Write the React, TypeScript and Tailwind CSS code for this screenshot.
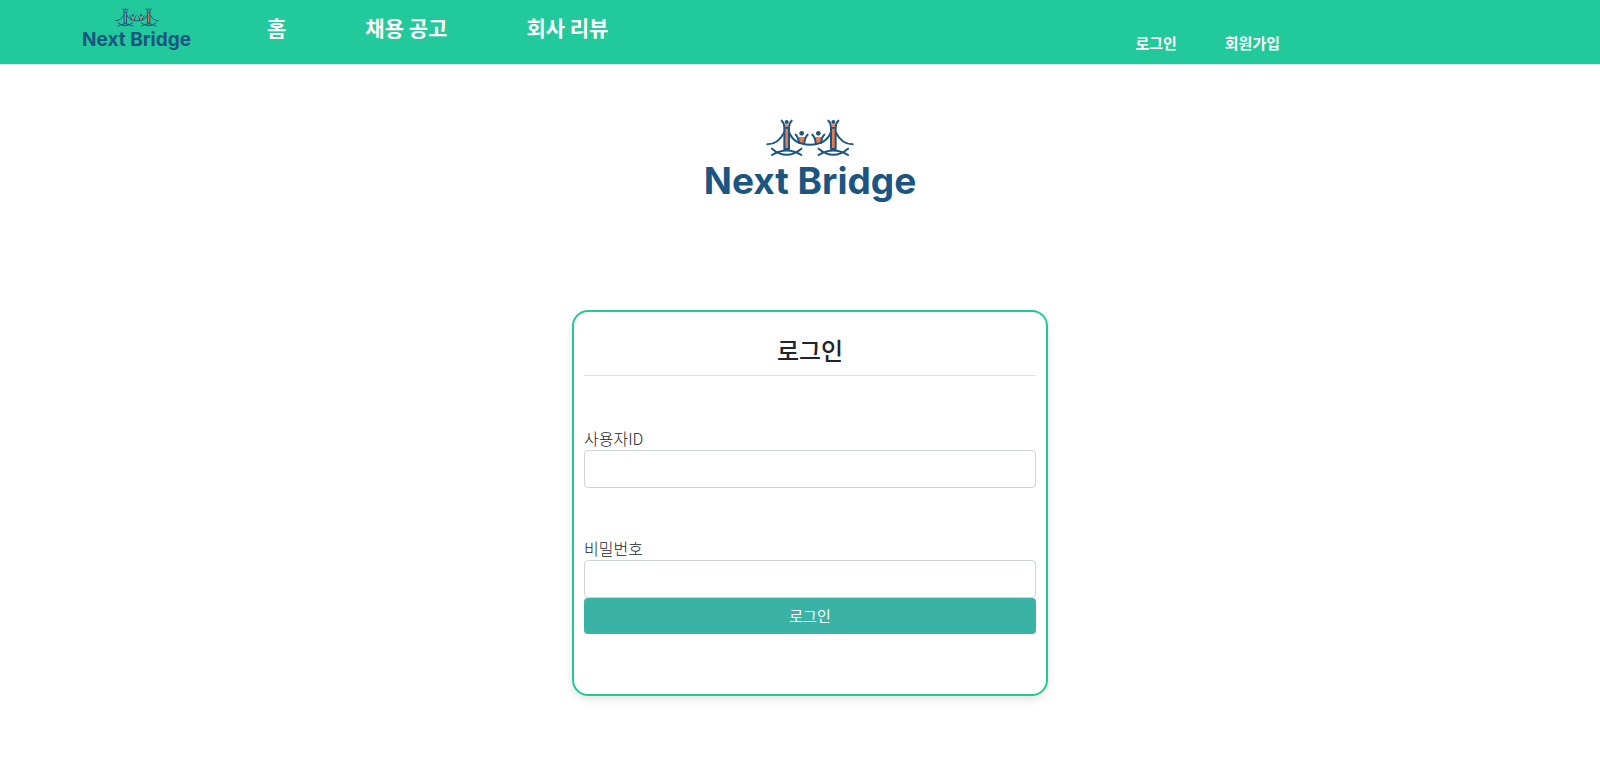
import React from "react";

const koreanFont = "font-['Noto_Sans_CJK_KR',sans-serif]";

function Tower({ x }: { x: number }) {
  return (
    <g transform={`translate(${x} 0)`}>
      <path d="M-5 66H5V131H-5Z" fill="#f0794a" stroke="none" />
      <path d="M-15 46Q-7 53 -7 66V131M15 46Q7 53 7 66V131M-7 67H7M-7 131H7" />
      <path d="M-5 57H5V64H-5Z" fill="#f0794a" stroke="none" />
      <circle cx="0" cy="50" r="6" fill="#1a5681" stroke="none" />
      <path d="M-44 130Q0 167 44 130M-44 149Q0 122 44 149" />
    </g>
  );
}

function Person({ x }: { x: number }) {
  return (
    <g transform={`translate(${x} 0)`}>
      <path d="M-10 95H10L7 115H-7Z" fill="#f0794a" stroke="none" />
      <path d="M-18 88Q-10 95 -8 113M18 88Q10 95 8 113" />
      <circle cx="0" cy="84" r="7" fill="#1a5681" stroke="none" />
    </g>
  );
}

function BridgeMark({ className }: { className: string }) {
  return (
    <svg
      viewBox="227 41 264 114"
      className={className}
      fill="none"
      stroke="#1a5681"
      strokeWidth="6"
      strokeLinecap="round"
      aria-hidden="true"
    >
      <Person x={334} />
      <Person x={384} />
      <path d="M231 117Q264 117 281 82M297 82Q311 118 359 118Q407 118 421 82M437 82Q454 117 487 117" />
      <Tower x={289} />
      <Tower x={429} />
    </svg>
  );
}

function Header() {
  return (
    <header className="flex h-[65px] items-start justify-between border-b border-[#dee2e6] bg-[#22c99a] pr-[20%] pl-[83px] font-bold text-white">
      <div className="flex items-start">
        <a href="#" className="flex w-[107px] flex-col items-center pt-2">
          <BridgeMark className="h-[19px] w-11" />
          <span className="font-[Inter,sans-serif] text-[19px] leading-[26px] whitespace-nowrap text-[#1a5681]">
            Next Bridge
          </span>
        </a>
        <nav className="flex gap-[79px] pt-[11px] pl-[77px] text-[21px] leading-8">
          <a href="#">홈</a>
          <a href="#">채용 공고</a>
          <a href="#">회사 리뷰</a>
        </nav>
      </div>
      <nav className="flex gap-12 pt-[31px] text-[15px] leading-6">
        <a href="#">로그인</a>
        <a href="#">회원가입</a>
      </nav>
    </header>
  );
}

export default function App() {
  return (
    <div className={`${koreanFont} text-[#212529]`}>
      <Header />
      <main className="flex flex-col items-center pb-19 pl-5">
        <div className="flex flex-col items-center pt-[54px]">
          <BridgeMark className="h-[38px] w-[88px]" />
          <div className="font-[Inter,sans-serif] text-[37px] leading-12 font-bold text-[#1a5681]">
            Next Bridge
          </div>
        </div>
        <form
          onSubmit={(e) => e.preventDefault()}
          className="mt-[105px] flex w-full max-w-[476px] flex-col rounded-2xl border-2 border-[#20c997] px-2.5 pt-[22px] pb-[60px] shadow-[0_4px_8px_rgba(0,0,0,0.1)]"
        >
          <h1 className="border-b border-[#dee2e6] pb-[9px] text-center text-2xl leading-8 font-medium">
            로그인
          </h1>
          <label htmlFor="user-id" className="mt-[50px] text-base leading-6 font-light">
            사용자ID
          </label>
          <input
            id="user-id"
            type="text"
            className="h-[38px] rounded border border-[#ced4da] px-3"
          />
          <label htmlFor="password" className="mt-12 text-base leading-6 font-light">
            비밀번호
          </label>
          <input
            id="password"
            type="password"
            className="h-[38px] rounded border border-[#ced4da] px-3"
          />
          <button
            type="submit"
            className="h-9 rounded bg-[#3ab2a6] text-[15px] leading-6 text-white"
          >
            로그인
          </button>
        </form>
      </main>
    </div>
  );
}
